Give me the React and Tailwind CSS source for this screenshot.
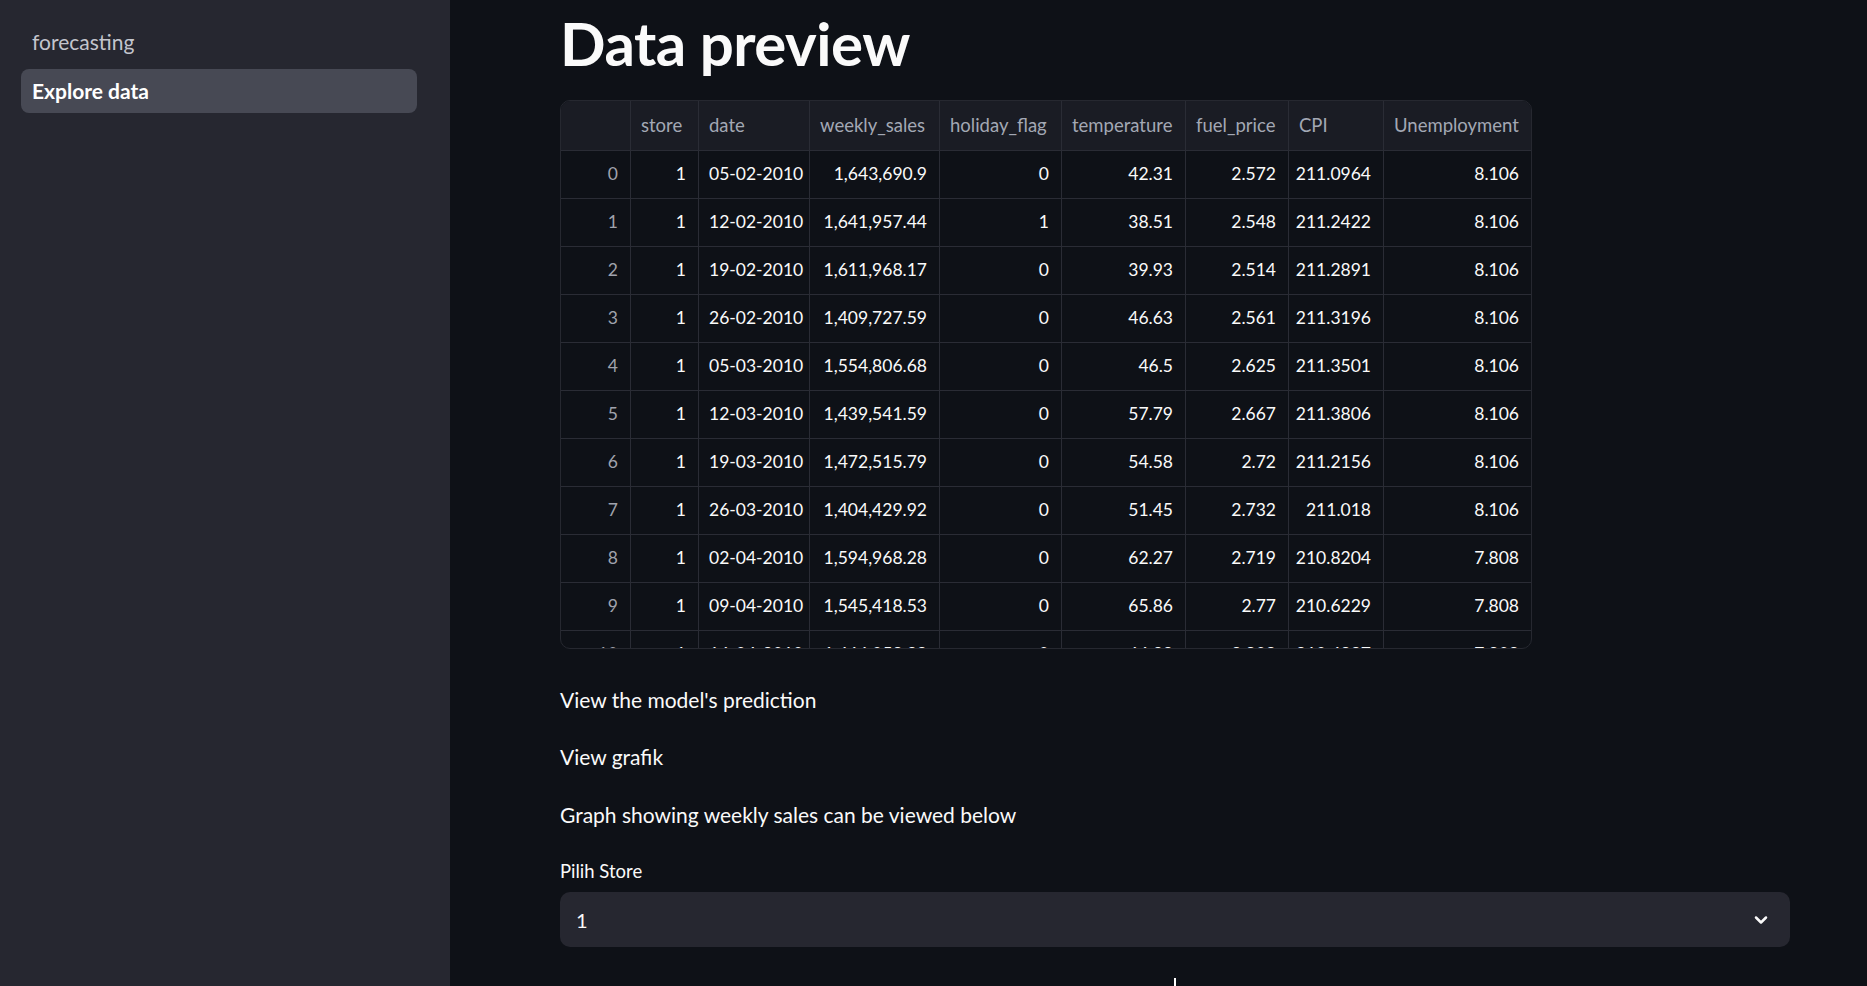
import { ChevronDown } from "lucide-react";

const columns = [
  { key: "store", label: "store", align: "right" },
  { key: "date", label: "date", align: "left" },
  { key: "sales", label: "weekly_sales", align: "right" },
  { key: "holiday", label: "holiday_flag", align: "right" },
  { key: "temp", label: "temperature", align: "right" },
  { key: "fuel", label: "fuel_price", align: "right" },
  { key: "cpi", label: "CPI", align: "right" },
  { key: "unemp", label: "Unemployment", align: "right" },
];

const rows = [
  ["1", "05-02-2010", "1,643,690.9", "0", "42.31", "2.572", "211.0964", "8.106"],
  ["1", "12-02-2010", "1,641,957.44", "1", "38.51", "2.548", "211.2422", "8.106"],
  ["1", "19-02-2010", "1,611,968.17", "0", "39.93", "2.514", "211.2891", "8.106"],
  ["1", "26-02-2010", "1,409,727.59", "0", "46.63", "2.561", "211.3196", "8.106"],
  ["1", "05-03-2010", "1,554,806.68", "0", "46.5", "2.625", "211.3501", "8.106"],
  ["1", "12-03-2010", "1,439,541.59", "0", "57.79", "2.667", "211.3806", "8.106"],
  ["1", "19-03-2010", "1,472,515.79", "0", "54.58", "2.72", "211.2156", "8.106"],
  ["1", "26-03-2010", "1,404,429.92", "0", "51.45", "2.732", "211.018", "8.106"],
  ["1", "02-04-2010", "1,594,968.28", "0", "62.27", "2.719", "210.8204", "7.808"],
  ["1", "09-04-2010", "1,545,418.53", "0", "65.86", "2.77", "210.6229", "7.808"],
  ["1", "16-04-2010", "1,466,058.28", "0", "66.32", "2.808", "210.4887", "7.808"],
];

const font = { fontFamily: "Lato, 'Open Sans', sans-serif" };

function DataTable() {
  return (
    <div className="mt-[21px] w-[972px] h-[549px] overflow-hidden rounded-[10px] border border-[#262830] bg-[#0e1117]">
      <div className="grid grid-cols-[70px_68px_111px_130px_122px_124px_103px_95px_147px] text-[17.5px] whitespace-nowrap">
        <div className="h-[50px] bg-[#1a1c24] border-r border-b border-[#2a2c35]" />
        {columns.map((c, i) => (
          <div
            key={c.key}
            className={
              "h-[50px] bg-[#1a1c24] border-b border-[#2a2c35] flex items-center justify-start px-[10px] text-[18.5px] text-[#a3a8b4] " +
              (i < columns.length - 1 ? "border-r" : "")
            }
          >
            {c.label}
          </div>
        ))}
        {rows.map((r, ri) => (
          <Row key={ri} index={ri} cells={r} />
        ))}
      </div>
    </div>
  );
}

function Row({ index, cells }) {
  return (
    <>
      <div className="h-[48px] flex items-center justify-end px-[12px] border-r border-b border-[#2a2c35] text-[#a0a3ad]">
        {index}
      </div>
      {cells.map((v, i) => (
        <div
          key={i}
          className={
            "h-[48px] flex items-center px-[12px] border-b border-[#2a2c35] text-[#fafafa] " +
            (i < cells.length - 1 ? "border-r " : "") +
            (columns[i].align === "left" ? "justify-start pl-[10px]" : "justify-end")
          }
        >
          {v}
        </div>
      ))}
    </>
  );
}

export default function App() {
  return (
    <div className="flex h-screen w-full overflow-hidden bg-[#0e1117] text-[#fafafa]" style={font}>
      <aside className="w-[450px] shrink-0 bg-[#262730] pl-[21px] pr-[33px] pt-[20px]">
        <div className="h-[44px] flex items-center px-[11px] text-[21px] text-[#c3c5cd]">forecasting</div>
        <div className="mt-[5px] h-[44px] flex items-center px-[11px] rounded-[8px] bg-[#474954] text-[21px] font-bold text-white">
          Explore data
        </div>
      </aside>

      <main className="flex-1 pl-[110px] pr-[77px]">
        <h1 className="mt-[7px] text-[60px] font-bold leading-[72px] tracking-[-0.5px]">Data preview</h1>
        <DataTable />

        <div className="mt-[35px] flex flex-col text-[21px]">
          <p className="leading-[32px]">View the model's prediction</p>
          <p className="mt-[25px] leading-[32px]">View grafik</p>
          <p className="mt-[26px] leading-[32px]">Graph showing weekly sales can be viewed below</p>
          <label className="mt-[28px] text-[18.5px] leading-[24px]">Pilih Store</label>
          <div className="mt-[9px] h-[55px] rounded-[10px] bg-[#262730] flex items-center justify-between pl-[16px] pr-[19px]">
            <span className="text-[20px]">1</span>
            <ChevronDown size={20} strokeWidth={3} color="#fafafa" />
          </div>
          <div className="mt-[31px] flex justify-center">
            <div className="ml-[-1px] h-[10px] w-[2px] bg-white" />
          </div>
        </div>
      </main>
    </div>
  );
}
